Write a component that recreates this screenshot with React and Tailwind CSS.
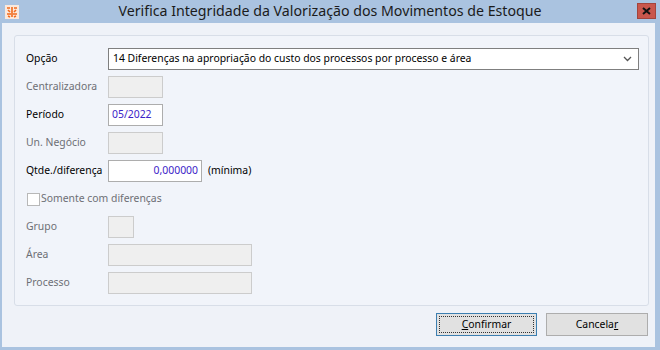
import React from 'react';

const font = { fontFamily: '"Noto Sans", "Open Sans", sans-serif' };

const Row = ({ label, disabled, children }) => (
  <div className="flex items-center h-[22px]">
    <span className={`w-[82px] shrink-0 text-[10.4px] whitespace-nowrap ${disabled ? 'text-[#6d6f75]' : 'text-black'}`}>{label}</span>
    {children}
  </div>
);

const Box = ({ w, white, children, right }) => (
  <div
    className={`${w} h-[22px] border flex items-center px-[3px] text-[10.4px] text-[#3b22c8] ${
      white ? 'bg-white border-[#adadad]' : 'bg-[#efefef] border-[#cccccc]'
    } ${right ? 'justify-end' : ''}`}
  >
    {children}
  </div>
);

const App = () => {
  return (
    <div className="w-[660px] h-[350px] bg-[#aac3e0] flex flex-col overflow-hidden" style={font}>
      {/* title bar */}
      <div className="h-[23px] flex items-center pl-[5px] pr-[4px] shrink-0">
        <svg width="14" height="14" viewBox="0 0 14 14" className="shrink-0">
          <rect x="0" y="0" width="14" height="14" fill="#fbe9dc" />
          <path d="M2 3h3M9 3h3M3 5l2 2M11 5l-2 2M2 9h4M8 9h4M3 11l2 1M11 11l-2 1M7 2v10" stroke="#f26a1b" strokeWidth="1.6" fill="none" />
        </svg>
        <div className="flex-1 text-center text-[14.2px] text-[#1b1b1b] leading-none pl-[4px]">
          Verifica Integridade da Valorização dos Movimentos de Estoque
        </div>
        <div className="w-[19px] h-[16px] bg-[#c9564c] border border-[#a3443c] flex items-center justify-center shrink-0 mb-[1px]">
          <svg width="9" height="8" viewBox="0 0 9 8">
            <path d="M1 1l7 6M8 1L1 7" stroke="#111" strokeWidth="2" />
          </svg>
        </div>
      </div>

      {/* client area */}
      <div className="flex-1 ml-[2px] mr-[5px] mb-[3px] bg-[#eff2f8] flex flex-col pl-[12px] pr-[6px] pt-[12px]">
        <div className="h-[271px] border border-[#d8dee8] rounded-[3px] bg-[#f1f4fa] pl-[11px] pr-[9px] pt-[12px] flex flex-col gap-[6px]">
          <Row label="Opção">
            <div className="flex-1 h-[22px] bg-white border border-[#7f7f7f] flex items-center pl-[4px] pr-[6px] text-[10.4px] text-black">
              <span className="flex-1">14 Diferenças na apropriação do custo dos processos por processo e área</span>
              <svg width="9" height="6" viewBox="0 0 9 6">
                <path d="M1 1l3.5 3.5L8 1" stroke="#555" strokeWidth="1.3" fill="none" />
              </svg>
            </div>
          </Row>
          <Row label="Centralizadora" disabled>
            <Box w="w-[55px]" />
          </Row>
          <Row label="Período">
            <Box w="w-[55px]" white>05/2022</Box>
          </Row>
          <Row label="Un. Negócio" disabled>
            <Box w="w-[55px]" />
          </Row>
          <Row label="Qtde./diferença">
            <Box w="w-[94px]" white right>0,000000</Box>
            <span className="ml-[6px] text-[10.4px] text-black">(mínima)</span>
          </Row>
          <div className="flex items-center h-[22px] pl-[1px]">
            <div className="w-[13px] h-[13px] bg-white border border-[#b8b8b8]" />
            <span className="ml-[1px] text-[10.4px] text-[#6d6f75]">Somente com diferenças</span>
          </div>
          <Row label="Grupo" disabled>
            <Box w="w-[26px]" />
          </Row>
          <Row label="Área" disabled>
            <Box w="w-[144px]" />
          </Row>
          <Row label="Processo" disabled>
            <Box w="w-[144px]" />
          </Row>
        </div>

        <div className="flex justify-end gap-[9px] mt-[7px] pr-[1px]">
          <button className="w-[101px] h-[23px] bg-[#e1e1e1] border border-[#3c7fb1] p-[2px] text-[10.4px] text-black">
            <div className="w-full h-full border border-dotted border-[#333] flex items-center justify-center leading-none">
              <span><u>C</u>onfirmar</span>
            </div>
          </button>
          <button className="w-[102px] h-[23px] bg-[#e1e1e1] border border-[#adadad] text-[10.4px] text-black flex items-center justify-center leading-none">
            <span>Cancela<u>r</u></span>
          </button>
        </div>
      </div>
    </div>
  );
};

export default App;
